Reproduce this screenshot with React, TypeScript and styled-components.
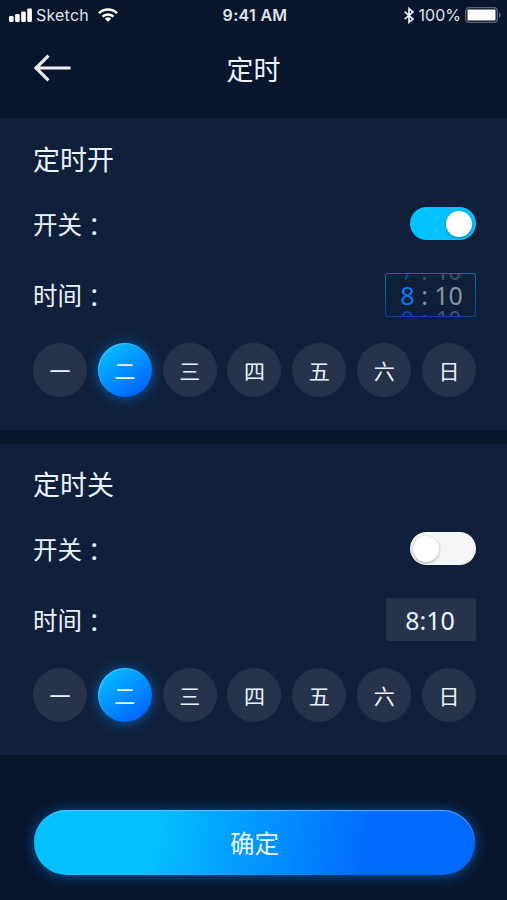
import React, { useState } from 'react';
import styled, { createGlobalStyle, css } from 'styled-components';

const Global = createGlobalStyle`
  * { box-sizing: border-box; }
  body { margin: 0; background: #08152b; }
  button { border: 0; padding: 0; font: inherit; color: inherit; background: none; cursor: pointer; }
`;

const Screen = styled.main`
  width: 507px;
  height: 900px;
  overflow: hidden;
  display: flex;
  flex-direction: column;
  background: #08152b;
  color: #eaf4ff;
  font-family: 'Noto Sans', 'Noto Sans CJK SC', sans-serif;
  font-weight: 400;
`;

const StatusBar = styled.div`
  height: 31px;
  flex: none;
  display: grid;
  grid-template-columns: 1fr auto 1fr;
  align-items: center;
  padding: 0 6px 0 9px;
  font-family: Inter, sans-serif;
  font-size: 16px;
  font-weight: 400;
  line-height: 31px;
  color: #dfe5ee;
`;

const StatusGroup = styled.div<{ $end?: boolean }>`
  display: flex;
  align-items: center;
  justify-content: ${(p) => (p.$end ? 'flex-end' : 'flex-start')};
  svg { display: block; flex: none; margin-bottom: 1px; }
`;

const Carrier = styled.span`
  margin: 0 9px 0 4px;
  letter-spacing: 0.2px;
`;

const Clock = styled.span`
  font-weight: 600;
  letter-spacing: 0.3px;
`;

const Percent = styled.span`
  margin: 0 4px 0 5px;
`;

const NavBar = styled.header`
  height: 87px;
  flex: none;
  display: grid;
  grid-template-columns: 1fr auto 1fr;
  align-items: center;
  padding: 0 33px 13px;
`;

const Title = styled.h1`
  margin: 4px 0 0;
  font-size: 27px;
  font-weight: 400;
  line-height: 40px;
`;

const BackButton = styled.button`
  justify-self: start;
  svg { display: block; margin-bottom: 1px; }
`;

const Panel = styled.section<{ $height: number }>`
  height: ${(p) => p.$height}px;
  flex: none;
  display: flex;
  flex-direction: column;
  justify-content: flex-end;
  padding: 0 31px 33px 33px;
  background: #10203a;
  & + & { margin-top: 14px; }
`;

const Heading = styled.h2`
  margin: 0;
  height: 81px;
  font-size: 27px;
  font-weight: 400;
  line-height: 79px;
`;

const Row = styled.div<{ $height: number }>`
  height: ${(p) => p.$height}px;
  display: flex;
  align-items: center;
  justify-content: space-between;
  padding-bottom: 2px;
`;

const Label = styled.span`
  font-size: 24.5px;
  line-height: 36px;
  padding-top: 1px;
  font-family: 'Noto Sans CJK SC', sans-serif;
`;

const Colon = styled.span`
  display: inline-block;
  padding-top: 4px;
  line-height: 32px;
  vertical-align: top;
  font-family: 'Noto Sans CJK TC', sans-serif;
`;

const Switch = styled.button<{ $on: boolean }>`
  width: 66px;
  height: 33px;
  border-radius: 17px;
  display: flex;
  align-items: center;
  justify-content: ${(p) => (p.$on ? 'flex-end' : 'flex-start')};
  padding: 0 4px 0 3px;
  background: ${(p) => (p.$on ? '#04c1ff' : '#f5f5f5')};
`;

const Knob = styled.span`
  width: 26px;
  height: 26px;
  border-radius: 50%;
  background: #fff;
  box-shadow: 0 1px 3px rgba(0, 20, 50, 0.35);
`;

const TimeBox = styled.div`
  width: 90px;
  height: 43px;
  border-radius: 2px;
  background: #26334b;
  font-size: 25px;
  line-height: 45px;
  text-align: center;
  padding-right: 2px;
`;

const Wheel = styled.div`
  width: 91px;
  height: 44px;
  overflow: hidden;
  border-radius: 3px;
  border: 1px solid transparent;
  background:
    linear-gradient(#10203a, #10203a) padding-box,
    linear-gradient(#087b9c, #0a42a2) border-box;
  display: flex;
  flex-direction: column;
  align-items: center;
  justify-content: center;
`;

const WheelLine = styled.div<{ $faded?: boolean }>`
  flex: none;
  display: grid;
  grid-template-columns: 15px 19px 29px;
  margin-left: 2px;
  text-align: center;
  color: #8b929e;
  ${(p) =>
    p.$faded
      ? css`
          height: 22px;
          line-height: 22px;
          font-size: 22px;
          opacity: 0.45;
        `
      : css`
          height: 25px;
          line-height: 27px;
          font-size: 25px;
        `}
`;

const Hour = styled.span`
  color: #0e7bf5;
`;

const Week = styled.div`
  height: 54px;
  display: flex;
  justify-content: space-between;
`;

const Day = styled.button<{ $active: boolean }>`
  width: 54px;
  height: 54px;
  border-radius: 50%;
  font-size: 21px;
  line-height: 54px;
  padding-top: 1px;
  background: #26334b;
  ${(p) =>
    p.$active &&
    css`
      background: linear-gradient(145deg, #05bdff 10%, #0067ff 85%);
      box-shadow: 0 1px 13px rgba(0, 133, 255, 0.6), inset 1px 1px 1px rgba(120, 210, 255, 0.55);
    `}
`;

const Confirm = styled.button`
  flex: none;
  height: 65px;
  margin: 55px 32px 0 34px;
  border-radius: 33px;
  font-size: 24.5px;
  line-height: 65px;
  padding-top: 1px;
  background: linear-gradient(100deg, #05c0ff 27%, #0069ff 76%);
  box-shadow: 0 1px 14px rgba(0, 133, 255, 0.6), inset 0 1px 1px rgba(150, 210, 255, 0.65);
`;

const DAYS = ['一', '二', '三', '四', '五', '六', '日'];

function WeekPicker() {
  const [active, setActive] = useState(1);
  return (
    <Week>
      {DAYS.map((day, i) => (
        <Day key={day} $active={i === active} onClick={() => setActive(i)}>
          {day}
        </Day>
      ))}
    </Week>
  );
}

function TimeWheel() {
  return (
    <Wheel>
      {[7, 8, 9].map((h) => (
        <WheelLine key={h} $faded={h !== 8}>
          <Hour>{h}</Hour>
          <span>:</span>
          <span>10</span>
        </WheelLine>
      ))}
    </Wheel>
  );
}

interface TimerProps {
  title: string;
  height: number;
  initialOn: boolean;
  children: React.ReactNode;
}

function Timer({ title, height, initialOn, children }: TimerProps) {
  const [on, setOn] = useState(initialOn);
  return (
    <Panel $height={height}>
      <Heading>{title}</Heading>
      <Row $height={47}>
        <Label>开关<Colon lang="zh-TW">：</Colon></Label>
        <Switch $on={on} role="switch" aria-checked={on} onClick={() => setOn(!on)}>
          <Knob />
        </Switch>
      </Row>
      <Row $height={95}>
        <Label>时间<Colon lang="zh-TW">：</Colon></Label>
        {children}
      </Row>
      <WeekPicker />
    </Panel>
  );
}

const SignalIcon = () => (
  <svg width="23" height="14" viewBox="0 0 23 14" fill="#fff">
    <rect x="0" y="8" width="4.6" height="6" rx="1.2" />
    <rect x="6.1" y="6" width="4.6" height="8" rx="1.2" />
    <rect x="12.2" y="3.5" width="4.6" height="10.5" rx="1.2" />
    <rect x="18.3" y="0.5" width="4.6" height="13.5" rx="1.2" />
  </svg>
);

const WifiIcon = () => (
  <svg width="20" height="14" viewBox="0 0 20 14" fill="none" stroke="#fff" strokeWidth="2.5">
    <path d="M1 5.2a13 13 0 0 1 18 0" />
    <path d="M4.4 8.6a8.2 8.2 0 0 1 11.2 0" />
    <path d="M10 13.8 6.8 10.8a4.8 4.8 0 0 1 6.4 0Z" fill="#fff" stroke="none" />
  </svg>
);

const BluetoothIcon = () => (
  <svg width="10" height="17" viewBox="0 0 10 17" fill="none" stroke="#e9eef6" strokeWidth="1.7">
    <path d="M0.7 4.7 9 12 5 15.3V1.6L9 5 0.7 12.2" />
  </svg>
);

const BatteryIcon = () => (
  <svg width="36" height="16" viewBox="0 0 36 16">
    <rect x="0.7" y="0.7" width="31.6" height="14.6" rx="3.4" fill="none" stroke="#5d6677" strokeWidth="1.3" />
    <rect x="2.5" y="2.5" width="28" height="11" rx="1" fill="#fff" />
    <path d="M34 5.5c1.2.4 1.7 1.3 1.7 2.5s-.5 2.1-1.7 2.5Z" fill="#5d6677" />
  </svg>
);

const BackIcon = () => (
  <svg width="38" height="28" viewBox="0 0 38 28" fill="none" stroke="#f0f0f5" strokeWidth="3.2">
    <path d="M37.5 14H3M15.5 1.6 3 14l12.5 12.4" />
  </svg>
);

export default function App() {
  return (
    <Screen>
      <Global />
      <StatusBar>
        <StatusGroup>
          <SignalIcon />
          <Carrier>Sketch</Carrier>
          <WifiIcon />
        </StatusGroup>
        <Clock>9:41 AM</Clock>
        <StatusGroup $end>
          <BluetoothIcon />
          <Percent>100%</Percent>
          <BatteryIcon />
        </StatusGroup>
      </StatusBar>
      <NavBar>
        <BackButton aria-label="返回">
          <BackIcon />
        </BackButton>
        <Title>定时</Title>
      </NavBar>
      <Timer title="定时开" height={312} initialOn>
        <TimeWheel />
      </Timer>
      <Timer title="定时关" height={311} initialOn={false}>
        <TimeBox>8:10</TimeBox>
      </Timer>
      <Confirm>确定</Confirm>
    </Screen>
  );
}
